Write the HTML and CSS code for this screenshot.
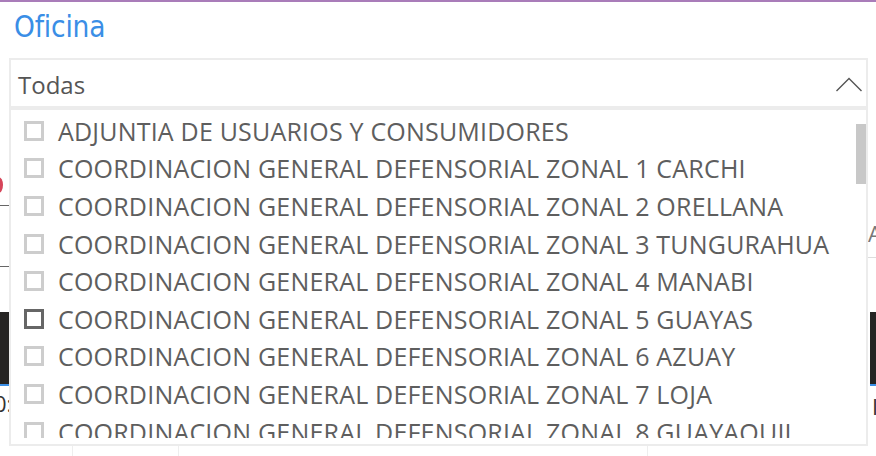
FILE: index.html
```html
<!DOCTYPE html>
<html lang="es">
<head>
<meta charset="utf-8">
<title>Oficina</title>
<link rel="stylesheet" href="styles.css">
</head>
<body>
<div class="page">
  <div class="topline"></div>
  <div class="backdrop">
    <span class="bg-dot"></span>
    <span class="bg-rule bg-rule-a"></span>
    <span class="bg-rule bg-rule-b"></span>
    <span class="bg-bar bg-bar-left"></span>
    <span class="bg-clip bg-clip-left"><span class="bg-text">0:</span></span>
    <span class="bg-clip bg-clip-right-a"><span class="bg-text">A</span></span>
    <span class="bg-rule bg-rule-right"></span>
    <span class="bg-bar bg-bar-right"></span>
    <span class="bg-clip bg-clip-right-b"><span class="bg-text">I</span></span>
    <span class="bg-vline bg-vline-1"></span>
    <span class="bg-vline bg-vline-2"></span>
    <span class="bg-vline bg-vline-3"></span>
  </div>
  <div class="slicer">
    <h1 class="title">Oficina</h1>
    <div class="dropdown">
      <span class="selected">Todas</span>
      <svg class="chevron" width="26" height="15" viewBox="0 0 26 15"><path d="M0.5 14 L13 1.5 L25.5 14" fill="none" stroke="#555" stroke-width="1.4"/></svg>
    </div>
    <div class="list">
      <div class="viewport">
        <ul class="items">
          <li class="item"><span class="box"></span>ADJUNTIA DE USUARIOS Y CONSUMIDORES</li>
          <li class="item"><span class="box"></span>COORDINACION GENERAL DEFENSORIAL ZONAL 1 CARCHI</li>
          <li class="item"><span class="box"></span>COORDINACION GENERAL DEFENSORIAL ZONAL 2 ORELLANA</li>
          <li class="item"><span class="box"></span>COORDINACION GENERAL DEFENSORIAL ZONAL 3 TUNGURAHUA</li>
          <li class="item"><span class="box"></span>COORDINACION GENERAL DEFENSORIAL ZONAL 4 MANABI</li>
          <li class="item hover"><span class="box"></span>COORDINACION GENERAL DEFENSORIAL ZONAL 5 GUAYAS</li>
          <li class="item"><span class="box"></span>COORDINACION GENERAL DEFENSORIAL ZONAL 6 AZUAY</li>
          <li class="item"><span class="box"></span>COORDINACION GENERAL DEFENSORIAL ZONAL 7 LOJA</li>
          <li class="item"><span class="box"></span>COORDINACION GENERAL DEFENSORIAL ZONAL 8 GUAYAQUIL</li>
        </ul>
      </div>
      <div class="scrollthumb"></div>
    </div>
  </div>
</div>
</body>
</html>
```
FILE: styles.css
```css
* { box-sizing: border-box; }
html, body { margin: 0; padding: 0; }
body { width: 876px; height: 456px; overflow: hidden; background: #fff; font-family: "Open Sans", "Noto Sans", sans-serif; }
.page { position: relative; width: 876px; height: 456px; }
.topline { height: 2px; background: #a97cb9; }

.backdrop { position: absolute; inset: 0; z-index: 0; }
.bg-dot { position: absolute; left: -6px; top: 177px; width: 9px; height: 16px; border-radius: 50%; background: #d6455a; }
.bg-rule { position: absolute; height: 1px; background: #666; }
.bg-rule-a { left: 0; top: 205px; width: 9px; }
.bg-rule-b { left: 0; top: 266px; width: 9px; }
.bg-rule-right { left: 868px; top: 257px; width: 8px; background: #ddd; }
.bg-bar { position: absolute; top: 312px; height: 74px; background: #252423; border-bottom: 2px solid #3a8ee6; }
.bg-bar-left { left: 0; width: 9px; }
.bg-bar-right { left: 870px; width: 6px; }
.bg-clip { position: absolute; overflow: hidden; height: 24px; }
.bg-text { display: block; font-family: "Open Sans", sans-serif; font-size: 22px; color: #333; line-height: 24px; white-space: nowrap; }
.bg-clip-left { left: 0; top: 391px; width: 9px; }
.bg-clip-left .bg-text { margin-left: -6px; }
.bg-clip-right-a { left: 868px; top: 221px; width: 8px; }
.bg-clip-right-a .bg-text { color: #777; }
.bg-clip-right-b { left: 870px; top: 394px; width: 6px; }
.bg-clip-right-b .bg-text { margin-left: 2px; }
.bg-vline { position: absolute; top: 444px; width: 1px; height: 12px; background: #eee; }
.bg-vline-1 { left: 72px; }
.bg-vline-2 { left: 178px; }
.bg-vline-3 { left: 647px; }

.slicer { position: relative; z-index: 1; padding: 5px 8px 0 9px; }
.title { margin: 0 0 0 5px; font-family: "DejaVu Sans Condensed", "DejaVu Sans", sans-serif; font-weight: normal; font-size: 29.5px; line-height: 40px; color: #3a8ee6; letter-spacing: -0.2px; }
.dropdown { margin-top: 11px; height: 50px; border: 2px solid #ececec; display: flex; align-items: center; justify-content: space-between; padding: 0 4px 0 7px; background: #fff; }
.selected { font-size: 24px; color: #555; padding-top: 2px; }
.chevron { margin-top: 3px; }

.list { position: absolute; left: 9px; top: 106px; width: 859px; height: 338px; border: 2px solid #ececec; background: #fff; padding-bottom: 6px; }
.viewport { height: 100%; overflow: hidden; }
.items { list-style: none; margin: 0; padding: 2px 0 0 13px; }
.item { display: flex; align-items: center; gap: 14px; height: 37.6px; font-size: 25px; color: #5e5e5e; white-space: nowrap; letter-spacing: 0.2px; }
.box { width: 20px; height: 20px; border: 3px solid #cdcdcd; background: #fff; flex: none; }
.hover .box { border-color: #666; }
.scrollthumb { position: absolute; right: 0; top: 14px; width: 10px; height: 60px; background: #c8c8c8; }
```
